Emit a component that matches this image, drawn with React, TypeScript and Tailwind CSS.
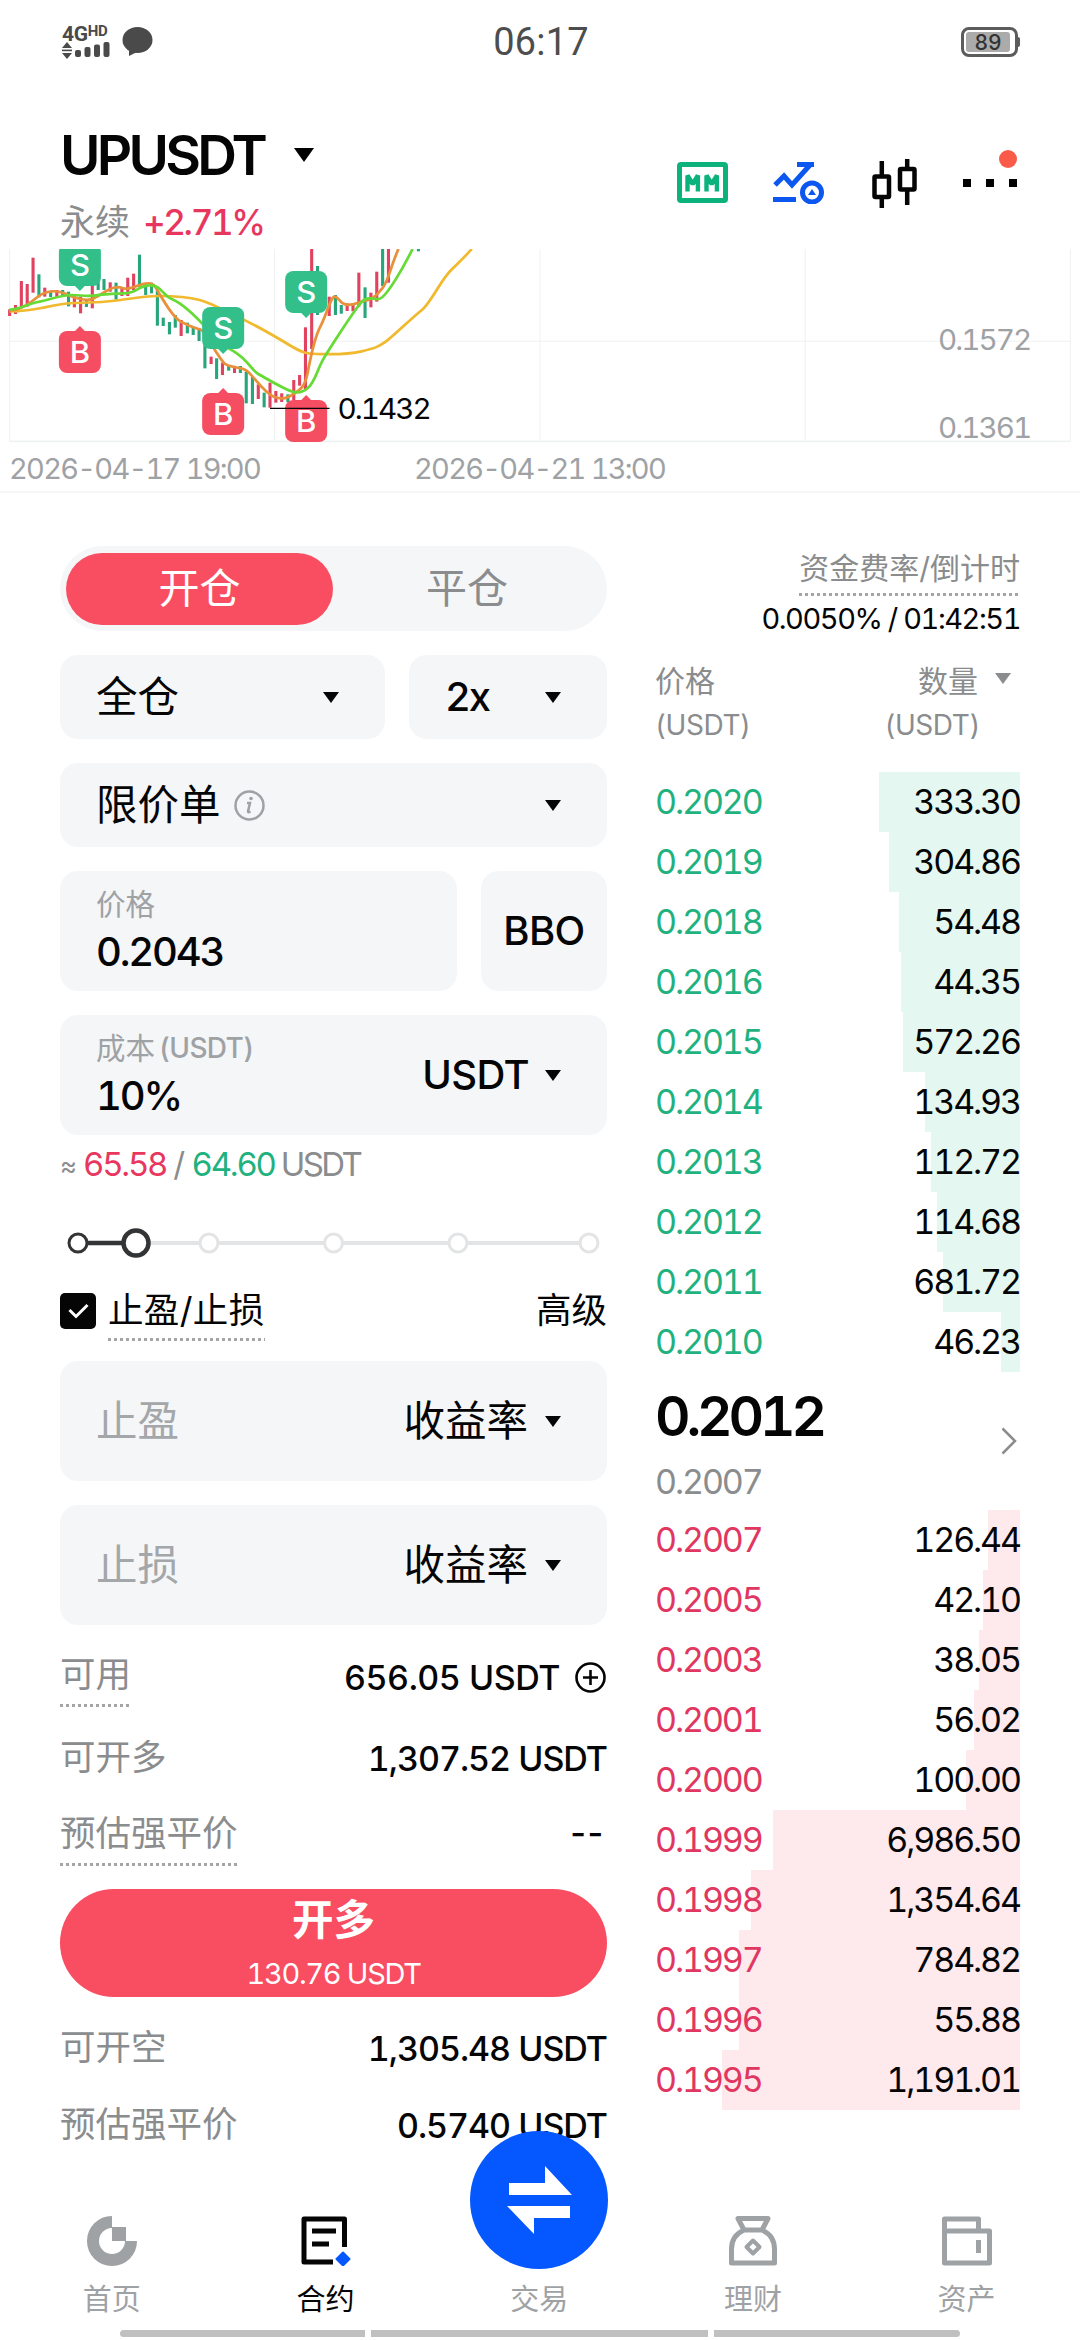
import type { ReactNode } from "react";

type Candle = [x: number, high: number, low: number, side: "r" | "g"];
type Level = { price: string; amount: string; depth: number };

const candles: Candle[] = [
  [28, 208, 228, "r"], [45, 195, 222, "r"], [62, 123, 200, "r"], [79, 132, 200, "r"], [96, 53, 158, "r"],
  [113, 103, 172, "g"], [130, 143, 170, "r"], [147, 155, 171, "g"], [165, 150, 172, "r"], [182, 150, 170, "g"],
  [199, 155, 199, "g"], [216, 165, 202, "r"], [234, 170, 220, "r"], [251, 178, 201, "g"], [268, 135, 205, "r"],
  [285, 125, 150, "g"], [302, 117, 150, "g"], [320, 127, 155, "r"], [337, 128, 179, "g"], [354, 145, 168, "r"],
  [371, 113, 168, "r"], [388, 101, 150, "r"], [405, 44, 140, "g"], [423, 130, 165, "g"], [440, 128, 160, "g"],
  [457, 150, 257, "g"], [474, 233, 258, "g"], [492, 246, 283, "g"], [509, 225, 263, "g"], [526, 240, 288, "r"],
  [544, 248, 280, "g"], [561, 260, 285, "g"], [578, 265, 303, "g"], [595, 300, 385, "g"], [613, 350, 372, "r"],
  [629, 355, 417, "g"], [646, 368, 405, "r"], [664, 375, 392, "g"], [681, 380, 399, "r"], [698, 378, 399, "g"],
  [715, 395, 490, "g"], [733, 410, 492, "g"], [750, 433, 477, "r"], [767, 458, 502, "g"], [784, 428, 503, "r"],
  [801, 453, 488, "r"], [818, 460, 486, "r"], [836, 463, 486, "g"], [853, 420, 480, "r"], [870, 405, 437, "r"],
  [887, 262, 450, "r"], [905, 20, 327, "r"], [922, 78, 225, "g"], [956, 170, 228, "r"], [974, 165, 225, "g"],
  [991, 195, 221, "g"], [1008, 190, 213, "r"], [1025, 190, 214, "r"], [1042, 98, 200, "r"], [1060, 142, 234, "g"],
  [1077, 158, 202, "r"], [1094, 95, 185, "r"], [1111, 20, 138, "g"], [1128, 20, 128, "r"], [1215, 20, 34, "g"],
];

const marks: { x: number; y: number; side: "B" | "S" }[] = [
  { x: 171, y: 12, side: "S" },
  { x: 587, y: 201, side: "S" },
  { x: 828, y: 93, side: "S" },
  { x: 171, y: 273, side: "B" },
  { x: 587, y: 459, side: "B" },
  { x: 828, y: 480, side: "B" },
];

const asks: Level[] = [
  { price: "0.2020", amount: "333.30", depth: 141 },
  { price: "0.2019", amount: "304.86", depth: 131 },
  { price: "0.2018", amount: "54.48", depth: 121 },
  { price: "0.2016", amount: "44.35", depth: 119 },
  { price: "0.2015", amount: "572.26", depth: 117 },
  { price: "0.2014", amount: "134.93", depth: 95 },
  { price: "0.2013", amount: "112.72", depth: 89 },
  { price: "0.2012", amount: "114.68", depth: 83 },
  { price: "0.2011", amount: "681.72", depth: 77 },
  { price: "0.2010", amount: "46.23", depth: 19 },
];

const bids: Level[] = [
  { price: "0.2007", amount: "126.44", depth: 32 },
  { price: "0.2005", amount: "42.10", depth: 37 },
  { price: "0.2003", amount: "38.05", depth: 41 },
  { price: "0.2001", amount: "56.02", depth: 46 },
  { price: "0.2000", amount: "100.00", depth: 54 },
  { price: "0.1999", amount: "6,986.50", depth: 247 },
  { price: "0.1998", amount: "1,354.64", depth: 269 },
  { price: "0.1997", amount: "784.82", depth: 281 },
  { price: "0.1996", amount: "55.88", depth: 281 },
  { price: "0.1995", amount: "1,191.01", depth: 298 },
];

export default function App() {
  return (
    <main className="flex h-[2340px] w-[1080px] flex-col overflow-hidden bg-white font-['Inter','Noto_Sans_CJK_SC',sans-serif] tabular-nums tracking-[-0.04em] text-[#050505]">
      <StatusBar />
      <Header />
      <PriceChart />
      <div className="flex h-[1663px] shrink-0 gap-12 px-[60px]">
        <OrderForm />
        <OrderBook />
      </div>
      <BottomNav />
    </main>
  );
}

function StatusBar() {
  return (
    <div className="flex h-[84px] shrink-0 items-center justify-between pl-[60px] pr-[60px]">
      <div className="flex w-[150px] items-center gap-3">
        <div className="flex w-[50px] flex-col pl-0.5">
          <div className="flex h-[17px] items-start font-['Roboto'] font-bold tracking-[-0.02em] text-[#4a4a4a]">
            <span className="text-[21px] leading-[18px]">4G</span>
            <span className="text-[15px] leading-[13px]">HD</span>
          </div>
          <svg className="h-[17px] w-[48px]" viewBox="0 0 48 17" fill="#4a4a4a">
            <path d="M5 0l5 6H0zM5 17l5-6H0z" />
            <rect x="0" y="7.6" width="10" height="1.6" />
            <rect x="13" y="8" width="6" height="7" rx="2" />
            <rect x="22.5" y="5" width="6" height="10" rx="2" />
            <rect x="32" y="2.5" width="6" height="12.5" rx="2" />
            <rect x="41.5" y="0" width="6" height="15" rx="2" />
          </svg>
        </div>
        <svg className="h-[30px] w-[31px]" viewBox="0 0 31 30" fill="#4a4a4a">
          <ellipse cx="15.5" cy="13" rx="15" ry="13" />
          <path d="M7 20v9l10-5z" />
        </svg>
      </div>
      <span className="pl-0.5 text-center font-['Roboto'] text-[38px] leading-none tracking-[0.005em] text-[#4d4d4d]">06:17</span>
      <div className="flex w-[150px] items-center justify-end">
        <div className="flex h-[30px] w-[57px] items-center rounded-[8px] border-[3px] border-[#5c5c5c] p-0.5">
          <div className="flex h-full w-[44px] items-center justify-center rounded-[3px] bg-[#ababab] text-[21px] font-medium leading-none tracking-normal text-[#333]">89</div>
        </div>
        <div className="h-[10px] w-[2px] rounded-r bg-[#5c5c5c]" />
      </div>
    </div>
  );
}

function Header() {
  return (
    <div className="flex h-[165px] shrink-0 justify-between px-[60px]">
      <div className="pt-[42px]">
        <div className="flex h-[58px] items-center">
          <h1 className="w-[234px] text-[55px] font-semibold leading-[58px] tracking-[-0.068em]">UPUSDT</h1>
          <svg className="h-[14px] w-[20px]" viewBox="0 0 20 14"><path d="M0 0h20L10 14z" /></svg>
        </div>
        <div className="mt-[16px] flex h-[44px] items-center gap-[13px] text-[35px]">
          <span className="tracking-normal text-[#8a8c8e]">永续</span>
          <span className="font-medium tracking-[-0.068em] text-[#e8375f]">+2.71%</span>
        </div>
      </div>
      <div className="mt-[74px] flex h-[49px] items-center pr-[3px]">
        <svg className="h-[41px] w-[51px]" viewBox="0 0 51 41">
          <rect x="2.5" y="2.5" width="46" height="36" rx="1.5" fill="none" stroke="#0bb27b" strokeWidth="5" />
          <path d="M10.500 29.500V13.500l5.200 8.500 5.200-8.500v16M29.500 29.500V13.500l5.200 8.500 5.200-8.500v16" fill="none" stroke="#0bb27b" strokeWidth="4.400" strokeLinejoin="bevel" />
        </svg>
        <svg className="ml-[45px] h-[43px] w-[51px]" viewBox="0 0 51 43" fill="none" stroke="#0c57f0" strokeWidth="5">
          <path d="M2 24l9-9 8 9L37 4M24 3.500h17" />
          <path d="M0 38.500h23" />
          <circle cx="39" cy="31.500" r="9.500" />
          <path d="M39 28l4 6h-8z" fill="#0c57f0" stroke="none" />
        </svg>
        <svg className="ml-[48px] h-[50px] w-[46px]" viewBox="0 0 46 50" fill="none" stroke="#050505">
          <rect x="2.500" y="18.500" width="14.500" height="20.500" rx="1" strokeWidth="4.500" />
          <rect x="28" y="11" width="14.500" height="20.500" rx="1" strokeWidth="4.500" />
          <path d="M9.800 3v14M9.800 40v10M35.200 1v9M35.200 33v14" strokeWidth="4.500" />
        </svg>
        <div className="relative ml-[45px] flex gap-[15px]">
          <i className="h-2 w-2 bg-black" />
          <i className="h-2 w-2 bg-black" />
          <i className="h-2 w-2 bg-black" />
          <i className="absolute -top-[29px] right-0 size-[18px] rounded-full bg-[#fa5a48]" />
        </div>
      </div>
    </div>
  );
}

function PriceChart() {
  return (
    <div className="flex h-[244px] shrink-0 flex-col">
      <svg className="h-[194px] w-[1080px] shrink-0" viewBox="0 27 3136 582" preserveAspectRatio="none">
        <g stroke="#f0f1f1" strokeWidth="3">
          <path d="M28 27V605M797 27V605M1568 27V605M2338 27V605M3108 27V605" />
          <path d="M28 304H3108" />
          <path d="M28 604H3108" strokeWidth="5" />
        </g>
        {candles.map(([x, high, low, side]) => (
          <rect key={x} x={x - 4.5} y={high} width="9" height={low - high} fill={side === "r" ? "#e0425f" : "#26a67a"} />
        ))}
        <g fill="none" strokeWidth="8" strokeLinejoin="round">
          <path stroke="#f0b92e" d="M28 214C60 214 90 210 120 204S180 190 220 189S310 186 350 180S420 168 460 168S550 172 580 180S650 210 700 235S800 290 840 315S890 341 920 342S1010 344 1050 334S1100 320 1120 305S1200 230 1225 210S1280 120 1310 90S1350 50 1370 27" />
          <path stroke="#e8903a" d="M28 212C50 210 65 204 85 190S120 156 150 154S185 160 205 168S245 182 265 178S310 145 335 142S350 150 375 145S410 130 430 130S450 140 465 165S500 230 525 245S560 262 580 268S610 310 630 340S650 375 675 380S710 385 725 400S770 460 795 470S835 475 855 460S885 440 893 400S910 300 930 260S960 170 972 170S985 190 1005 194S1040 186 1060 182S1090 170 1110 145S1130 90 1157 27" />
          <path stroke="#66db35" d="M28 209C60 208 80 192 110 186S180 164 210 165S250 170 280 166S320 160 360 160S400 136 435 136S470 165 500 178S560 220 600 265S640 310 680 335S730 390 750 402S810 437 830 447S870 465 893 445S920 390 940 355S1020 225 1045 192S1085 185 1105 175S1170 85 1198 27" />
        </g>
        {marks.map(({ x, y, side }) => (
          <g key={`${x}-${y}`} fill={side === "S" ? "#32bf8a" : "#f54d62"}>
            <rect x={x} y={y} width="122" height="126" rx="24" />
            <path d={side === "S" ? `M${x + 46} ${y + 125}h30l-15 16z` : `M${x + 46} ${y + 1}h30l-15 -16z`} />
            <text x={x + 61} y={y + 97} textAnchor="middle" fill="#fff" fontSize="90" fontWeight="500" letterSpacing="0">{side}</text>
          </g>
        ))}
        <path d="M784 505H957" stroke="#050505" strokeWidth="4" />
        <g fontSize="86" letterSpacing="-5.700">
          <text x="980" y="537" fill="#050505">0.1432</text>
          <text x="2724" y="329" fill="#9fa2a5">0.1572</text>
          <text x="2724" y="593" fill="#9fa2a5">0.1361</text>
        </g>
      </svg>
      <div className="flex h-[50px] items-center gap-[154px] border-b-2 border-[#f5f6f6] pl-[9px] pt-[3px] text-[29px] tracking-[-0.06em] text-[#9fa2a5]">
        <span className="w-[251px] whitespace-nowrap">2026-04-17 19:00</span>
        <span>2026-04-21 13:00</span>
      </div>
    </div>
  );
}

function OrderForm() {
  return (
    <section className="w-[547px] shrink-0 pt-[53px]">
      <div className="flex h-[85px] items-center rounded-full bg-[#f4f6f8] px-1.5 text-[41px] tracking-normal">
        <div className="flex h-[72px] w-[267px] items-center justify-center rounded-full bg-[#f94d61] text-white">开仓</div>
        <div className="flex-1 text-center text-[#8a8c8e]">平仓</div>
      </div>

      <div className="mt-6 flex gap-6">
        <Field className="h-[84px] w-[325px]"><span className="text-[41.5px] tracking-normal">全仓</span><Caret /></Field>
        <Field className="h-[84px] flex-1"><span className="text-[40px] font-medium tracking-[-0.055em]">2x</span><Caret /></Field>
      </div>

      <Field className="mt-6 h-[84px]">
        <div className="flex items-center gap-[13px]">
          <span className="text-[41.5px] tracking-normal">限价单</span>
          <svg className="size-[31px]" viewBox="0 0 31 31" fill="none" stroke="#9fa2a5">
            <circle cx="15.500" cy="15.500" r="14" strokeWidth="2.500" />
            <path d="M13 13h3l-2 8.500q0 1.500 2.500 0" strokeWidth="2.500" />
            <circle cx="17" cy="8.500" r="1.800" fill="#9fa2a5" stroke="none" />
          </svg>
        </div>
        <Caret />
      </Field>

      <div className="mt-6 flex gap-6">
        <Field className="h-[120px] w-[397px]">
          <div>
            <div className="text-[29.5px] leading-[40px] tracking-normal text-[#9fa2a5]">价格</div>
            <div className="mb-[3px] mt-1 text-[40px] font-medium leading-[48px] tracking-[-0.055em]">0.2043</div>
          </div>
        </Field>
        <div className="flex h-[120px] flex-1 items-center justify-center rounded-[18px] bg-[#f4f6f8] text-[40px] font-medium">BBO</div>
      </div>

      <Field className="mt-6 h-[120px]">
        <div>
          <div className="flex text-[29.5px] leading-[40px] text-[#9fa2a5]">
            <span className="tracking-normal">成本</span><span className="ml-1 text-[28px] font-medium">(USDT)</span>
          </div>
          <div className="mb-[3px] mt-1 text-[40px] font-medium leading-[48px] tracking-[-0.055em]">10%</div>
        </div>
        <div className="flex items-center gap-[16px]"><span className="text-[40px] font-medium">USDT</span><Caret /></div>
      </Field>

      <div className="mt-2 flex h-[44px] items-center gap-[7px] text-[33px] text-[#8a8c8e]">
        <span className="w-[16px] text-[26px]">≈</span>
        <span className="tracking-[-0.068em] text-[#e8375f]">65.58</span>
        <span>/</span>
        <span className="tracking-[-0.068em] text-[#1fb27f]">64.60</span>
        <span className="-ml-px tracking-[-0.08em]">USDT</span>
      </div>

      <svg className="mt-[40px] h-[32px] w-[547px]" viewBox="60 0 547 32" fill="#fff">
        <path d="M78 16H589" stroke="#e2e4e5" strokeWidth="4" />
        <path d="M78 16H136" stroke="#333436" strokeWidth="4.500" />
        {[209, 333.5, 458, 589].map((x) => <circle key={x} cx={x} cy="16" r="9" stroke="#e2e4e5" strokeWidth="3" />)}
        <circle cx="78" cy="16" r="9" stroke="#333436" strokeWidth="3" />
        <circle cx="136" cy="16" r="12.500" stroke="#333436" strokeWidth="4.500" />
      </svg>

      <div className="mt-[30px] flex h-[54px] justify-between text-[35.5px] leading-[43px] tracking-normal">
        <div className="flex gap-3">
          <div className="mt-[4px] flex size-9 items-center justify-center rounded-[5px] bg-[#050505]">
            <svg className="h-[16px] w-[21px]" viewBox="0 0 21 16"><path d="M1.500 7l6.500 6.500L19.500 2" fill="none" stroke="#fff" strokeWidth="3" /></svg>
          </div>
          <Dotted className="h-[52px] tracking-[0.01em]">止盈/止损</Dotted>
        </div>
        <span>高级</span>
      </div>

      <Field className="mt-[18px] h-[120px]">
        <span className="text-[41.5px] tracking-normal text-[#a4a7aa]">止盈</span>
        <div className="flex items-center gap-[17px]"><span className="text-[41.5px] tracking-normal">收益率</span><Caret /></div>
      </Field>
      <Field className="mt-6 h-[120px]">
        <span className="text-[41.5px] tracking-normal text-[#a4a7aa]">止损</span>
        <div className="flex items-center gap-[17px]"><span className="text-[41.5px] tracking-normal">收益率</span><Caret /></div>
      </Field>

      <div className="mt-[26px] flex h-[80px] items-start justify-between">
        <Dotted className="h-[56px] text-[35.5px] leading-[48px] tracking-normal text-[#8a8c8e]">可用</Dotted>
        <div className="flex h-[52px] items-center gap-[14px] text-[34px] font-medium tracking-[-0.014em]">
          656.05 USDT
          <svg className="size-[33px]" viewBox="0 0 33 33" fill="none" stroke="#050505" strokeWidth="2.600">
            <circle cx="16.500" cy="16.500" r="14" />
            <path d="M16.500 9v15M9 16.500h15" />
          </svg>
        </div>
      </div>
      <Row label="可开多" value="1,307.52 USDT" />
      <div className="mt-[21px] flex h-[76px] items-start justify-between">
        <Dotted className="h-[60px] text-[35.5px] leading-[56px] tracking-normal text-[#8a8c8e]">预估强平价</Dotted>
        <span className="pr-0.5 text-[34px] font-medium proportional-nums leading-[54px] tracking-[0.05em]">--</span>
      </div>

      <button className="mt-[7px] flex h-[108px] w-full flex-col items-center rounded-full bg-[#f94d61] text-white">
        <span className="mt-[4px] text-[41.5px] font-bold leading-[54px] tracking-normal">开多</span>
        <span className="text-[29px] leading-[54px] tracking-[-0.045em]">130.76 USDT</span>
      </button>

      <div className="mt-[24px]"><Row label="可开空" value="1,305.48 USDT" /></div>
      <div className="mt-[23px]"><Row label="预估强平价" value="0.5740 USDT" /></div>
    </section>
  );
}

function OrderBook() {
  return (
    <section className="w-[365px] pt-[54px]">
      <div className="flex flex-col items-end">
        <Dotted className="h-[49px] text-[30px] leading-[42px] tracking-normal text-[#8a8c8e]">资金费率/倒计时</Dotted>
        <div className="mt-[3px] whitespace-nowrap text-[29px] leading-[40px] tracking-[-0.05em]">0.0050% / 01:42:51</div>
      </div>
      <div className="mt-[20px] flex justify-between text-[28px] leading-[44px] tracking-[-0.015em] text-[#8a8c8e]">
        <div><div className="text-[30px] tracking-normal">价格</div><div>(USDT)</div></div>
        <div className="flex pr-[9px]">
          <div className="text-right"><div className="text-[30px] tracking-normal">数量</div><div className="-mr-0.5">(USDT)</div></div>
          <svg className="ml-[17px] mt-[14px] h-[11px] w-[16px]" viewBox="0 0 16 11"><path d="M0 0h16L8 11z" fill="#8a8c8e" /></svg>
        </div>
      </div>
      <div className="mt-[25px]">
        {asks.map((level) => <BookRow key={level.price} level={level} side="ask" />)}
      </div>
      <div className="flex h-[138px] items-center justify-between">
        <div>
          <div className="mt-[14px] text-[55px] font-semibold leading-[58px] tracking-[-0.075em]">0.2012</div>
          <div className="mt-[10px] text-[34px] leading-[54px] tracking-[-0.062em] text-[#8a8c8e]">0.2007</div>
        </div>
        <svg className="mr-[3px] h-[28px] w-[16px]" viewBox="0 0 16 28"><path d="M1.500 1.500L14 14 1.500 26.500" fill="none" stroke="#8a8c8e" strokeWidth="2.500" /></svg>
      </div>
      <div>
        {bids.map((level) => <BookRow key={level.price} level={level} side="bid" />)}
      </div>
    </section>
  );
}

function BookRow({ level, side }: { level: Level; side: "ask" | "bid" }) {
  const color = side === "ask" ? "#e4f8f1" : "#fee9ed";
  return (
    <div
      className="flex h-[60px] items-center justify-between pb-0.5 text-[34px] tracking-[-0.062em]"
      style={{ background: `linear-gradient(${color}, ${color}) right / ${level.depth}px 100% no-repeat` }}
    >
      <span className={side === "ask" ? "text-[#1fb27f]" : "text-[#e0365f]"}>{level.price}</span>
      <span>{level.amount}</span>
    </div>
  );
}

function BottomNav() {
  return (
    <nav className="relative flex h-[184px] shrink-0 flex-col bg-white">
      <div className="flex pl-[5px] pt-[60px]">
        <NavItem label="首页">
          <svg className="size-[50px]" viewBox="0 0 50 50" fill="none" stroke="#9fa2a5">
            <path d="M25 6A19 19 0 1 0 44 25" strokeWidth="12" />
            <path d="M25 11h14v14H25z" fill="#9fa2a5" stroke="none" />
          </svg>
        </NavItem>
        <NavItem label="合约" active>
          <svg className="size-[50px]" viewBox="0 0 50 50" fill="none" stroke="#050505" strokeWidth="5">
            <path d="M43.500 31V3H3v43h29" strokeLinejoin="round" />
            <path d="M11 15h24M11 28h17" />
            <path d="M42 36.500l6.500 6.500-6.500 6.500-6.500-6.500z" fill="#0557ff" stroke="#0557ff" strokeWidth="2" strokeLinejoin="round" />
          </svg>
        </NavItem>
        <NavItem label="交易"><span className="size-[50px]" /></NavItem>
        <NavItem label="理财">
          <svg className="size-[50px]" viewBox="0 0 50 50" fill="none" stroke="#9fa2a5" strokeWidth="5" strokeLinejoin="round">
            <path d="M10 2.500h30L34 14H16zM16 14C7 18 3.500 25 3.500 33v14h43V33C46.500 25 43 18 34 14z" />
            <path d="M25 24.500l6.500 6.500-6.500 6.500-6.500-6.500z" strokeWidth="4" />
          </svg>
        </NavItem>
        <NavItem label="资产">
          <svg className="size-[50px]" viewBox="0 0 50 50" fill="none" stroke="#9fa2a5" strokeWidth="5" strokeLinejoin="round">
            <path d="M2.500 15V3h34v12M2.500 15h45v32h-45z" />
            <path d="M36.500 24v13" />
          </svg>
        </NavItem>
      </div>
      <div className="mt-auto flex justify-center gap-1.5 pb-[3px]">
        <i className="h-[7px] w-[245px] rounded-l-full bg-[#c0c0c0]" />
        <i className="h-[7px] w-[337px] bg-[#c0c0c0]" />
        <i className="h-[7px] w-[246px] rounded-r-full bg-[#c0c0c0]" />
      </div>
      <div className="absolute -top-[25px] left-[470px] flex size-[138px] items-center justify-center rounded-full bg-[#0557ff]">
        <svg className="h-[68px] w-[65px]" viewBox="0 0 65 68" fill="#fff">
          <path d="M2 17h36V0l27 29H2zM63 52H27v16L0 40h63z" />
        </svg>
      </div>
    </nav>
  );
}

function NavItem({ label, active, children }: { label: string; active?: boolean; children: ReactNode }) {
  return (
    <div className="flex w-[213.700px] flex-col items-center">
      {children}
      <span className={active ? "mt-3 text-[29px] leading-[44px] tracking-normal text-[#050505]" : "mt-3 text-[29px] leading-[44px] tracking-normal text-[#9fa2a5]"}>{label}</span>
    </div>
  );
}

function Field({ className, children }: { className: string; children: ReactNode }) {
  return <div className={`flex items-center justify-between rounded-[18px] bg-[#f4f6f8] pl-9 pr-[46px] ${className}`}>{children}</div>;
}

function Row({ label, value }: { label: string; value: string }) {
  return (
    <div className="flex h-[54px] items-center justify-between">
      <span className="text-[35.5px] tracking-normal text-[#8a8c8e]">{label}</span>
      <span className="text-[34px] font-medium tracking-[-0.03em]">{value}</span>
    </div>
  );
}

function Dotted({ className, children }: { className: string; children: ReactNode }) {
  return (
    <div className={`flex flex-col justify-between ${className}`}>
      {children}
      <i className="h-[3px] shrink-0 bg-[repeating-linear-gradient(90deg,#a3a5a7_0_3px,transparent_3px_6px)]" />
    </div>
  );
}

function Caret() {
  return <svg className="h-[11px] w-[16px] shrink-0" viewBox="0 0 16 11"><path d="M0 0h16L8 11z" fill="#050505" /></svg>;
}
